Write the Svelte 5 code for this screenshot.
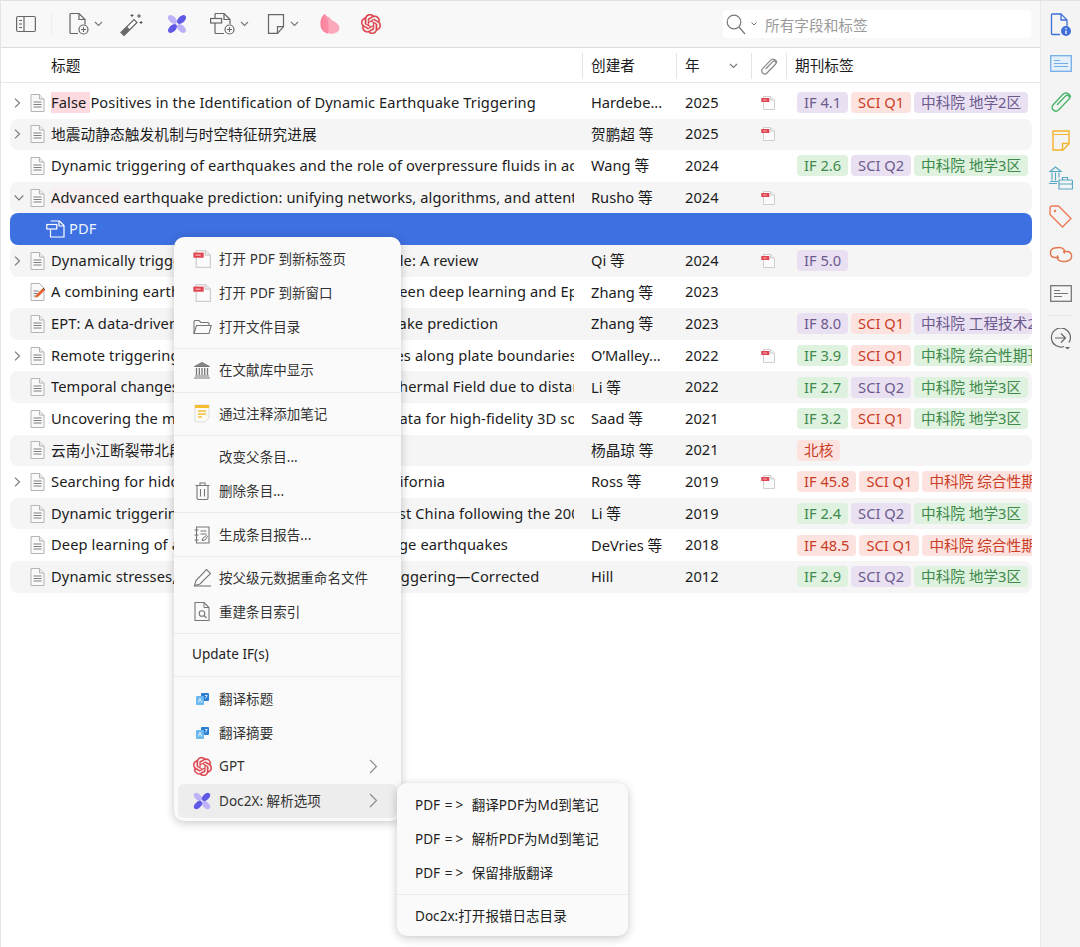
<script>
  const P = 'p', R = 'r', G = 'g';
  const rows = [
    { tw: 'r', ic: 'doc', hl: 'False ', title: 'Positives in the Identification of Dynamic Earthquake Triggering', who: 'Hardebe...', yr: '2025', pdf: true, tags: [[P, 'IF 4.1'], [R, 'SCI Q1'], [P, '中科院 地学2区']] },
    { tw: 'r', ic: 'doc', title: '地震动静态触发机制与时空特征研究进展', who: '贺鹏超 等', yr: '2025', pdf: true, tags: [] },
    { ic: 'doc', title: 'Dynamic triggering of earthquakes and the role of overpressure fluids in active faults', who: 'Wang 等', yr: '2024', tags: [[G, 'IF 2.6'], [P, 'SCI Q2'], [G, '中科院 地学3区']] },
    { tw: 'd', ic: 'doc', soft: 'Advanced', title: ' earthquake prediction: unifying networks, algorithms, and attention-based models', who: 'Rusho 等', yr: '2024', pdf: true, tags: [] },
    { sel: true, title: 'PDF', tags: [] },
    { tw: 'r', ic: 'doc', title: 'Dynamically triggered seismicity on the global scale: A review', who: 'Qi 等', yr: '2024', pdf: true, tags: [[P, 'IF 5.0']] },
    { ic: 'pen', title: 'A combining earthquake forecasting models between deep learning and Epidemic', who: 'Zhang 等', yr: '2023', tags: [] },
    { ic: 'doc', title: 'EPT: A data-driven transformer model for earthquake prediction', who: 'Zhang 等', yr: '2023', tags: [[P, 'IF 8.0'], [R, 'SCI Q1'], [P, '中科院 工程技术2区']] },
    { tw: 'r', ic: 'doc', title: 'Remote triggering of deep tremor and earthquakes along plate boundaries', who: 'O’Malley...', yr: '2022', pdf: true, tags: [[G, 'IF 3.9'], [R, 'SCI Q1'], [G, '中科院 综合性期刊']] },
    { ic: 'doc', title: 'Temporal changes of the Seismicity Rate in a Geothermal Field due to distant earthquakes', who: 'Li 等', yr: '2022', tags: [[G, 'IF 2.7'], [P, 'SCI Q2'], [G, '中科院 地学3区']] },
    { ic: 'doc', title: 'Uncovering the mechanisms using deep seismic data for high-fidelity 3D source models', who: 'Saad 等', yr: '2021', tags: [[G, 'IF 3.2'], [R, 'SCI Q1'], [G, '中科院 地学3区']] },
    { ic: 'doc', title: '云南小江断裂带北段', who: '杨晶琼 等', yr: '2021', tags: [[R, '北核']] },
    { tw: 'r', ic: 'doc', title: 'Searching for hidden earthquakes in Southern California', who: 'Ross 等', yr: '2019', pdf: true, tags: [[R, 'IF 45.8'], [R, 'SCI Q1'], [R, '中科院 综合性期刊']] },
    { ic: 'doc', title: 'Dynamic triggering of earthquakes in an Southwest China following the 2004 event', who: 'Li 等', yr: '2019', tags: [[G, 'IF 2.4'], [P, 'SCI Q2'], [G, '中科院 地学3区']] },
    { ic: 'doc', title: 'Deep learning of aftershock patterns following large earthquakes', who: 'DeVries 等', yr: '2018', tags: [[R, 'IF 48.5'], [R, 'SCI Q1'], [R, '中科院 综合性期刊']] },
    { ic: 'doc', title: 'Dynamic stresses, Coulomb failure, and remote triggering—Corrected', who: 'Hill', yr: '2012', tags: [[G, 'IF 2.9'], [P, 'SCI Q2'], [G, '中科院 地学3区']] }
  ];
  const menu = [
    [['pdf', '打开 PDF 到新标签页'], ['pdf', '打开 PDF 到新窗口'], ['folder', '打开文件目录']],
    [['bank', '在文献库中显示']],
    [['note', '通过注释添加笔记']],
    [['', '改变父条目...'], ['trash', '删除条目...']],
    [['report', '生成条目报告...']],
    [['rename', '按父级元数据重命名文件'], ['reindex', '重建条目索引']],
    [[null, 'Update IF(s)']],
    [['trans', '翻译标题'], ['trans', '翻译摘要'], ['gpt', 'GPT', true], ['x', 'Doc2X: 解析选项', true, true]]
  ];
  const GPT = 'M22.2819 9.8211a5.9847 5.9847 0 0 0-.5157-4.9108 6.0462 6.0462 0 0 0-6.5098-2.9A6.0651 6.0651 0 0 0 4.9807 4.1818a5.9847 5.9847 0 0 0-3.9977 2.9 6.0462 6.0462 0 0 0 .7427 7.0966 5.98 5.98 0 0 0 .511 4.9107 6.051 6.051 0 0 0 6.5146 2.9001A5.9847 5.9847 0 0 0 13.2599 24a6.0557 6.0557 0 0 0 5.7718-4.2058 5.9894 5.9894 0 0 0 3.9977-2.9001 6.0557 6.0557 0 0 0-.7475-7.0729zm-9.022 12.6081a4.4755 4.4755 0 0 1-2.8764-1.0408l.1419-.0804 4.7783-2.7582a.7948.7948 0 0 0 .3927-.6813v-6.7369l2.02 1.1686a.071.071 0 0 1 .038.052v5.5826a4.504 4.504 0 0 1-4.4945 4.4944zm-9.6607-4.1254a4.4708 4.4708 0 0 1-.5346-3.0137l.142.0852 4.783 2.7582a.7712.7712 0 0 0 .7806 0l5.8428-3.3685v2.3324a.0804.0804 0 0 1-.0332.0615L9.74 19.9502a4.4992 4.4992 0 0 1-6.1408-1.6464zM2.3408 7.8956a4.485 4.485 0 0 1 2.3655-1.9728V11.6a.7664.7664 0 0 0 .3879.6765l5.8144 3.3543-2.0201 1.1685a.0757.0757 0 0 1-.071 0l-4.8303-2.7865A4.504 4.504 0 0 1 2.3408 7.872zm16.5963 3.8558L13.1038 8.364 15.1192 7.2a.0757.0757 0 0 1 .071 0l4.8303 2.7913a4.4944 4.4944 0 0 1-.6765 8.1042v-5.6772a.79.79 0 0 0-.407-.667zm2.0107-3.0231l-.142-.0852-4.7735-2.7818a.7759.7759 0 0 0-.7854 0L9.409 9.2297V6.8974a.0662.0662 0 0 1 .0284-.0615l4.8303-2.7866a4.4992 4.4992 0 0 1 6.6802 4.66zM8.3065 12.863l-2.02-1.1638a.0804.0804 0 0 1-.038-.0567V6.0742a4.4992 4.4992 0 0 1 7.3757-3.4537l-.142.0805L8.704 5.459a.7948.7948 0 0 0-.3927.6813zm1.0976-2.3654l2.602-1.4998 2.6069 1.4998v2.9994l-2.5974 1.4997-2.6067-1.4997Z';
</script>

{#snippet chev()}
  <svg class="chev" width="9" height="6" viewBox="0 0 9 6"><path d="M1 1l3.500 3.500L8 1" fill="none" stroke="#777" stroke-width="1.100"/></svg>
{/snippet}

{#snippet docIcon()}
  <svg width="15" height="18" viewBox="0 0 15 18"><path d="M1 .5h8.500l4.500 4.500v12.500H1z" fill="#f9f9f9" stroke="#b4b4b4"/><path d="M9.500.5V5H14" fill="#eee" stroke="#b4b4b4"/><path d="M3.500 8h8M3.500 10.500h8M3.500 13h8" stroke="#808080"/></svg>
{/snippet}

{#snippet penIcon()}
  <svg width="15" height="18" viewBox="0 0 15 18"><path d="M1 .5h8.500l4.500 4.500v12.500H1z" fill="#f9f9f9" stroke="#b4b4b4"/><path d="M3.500 8h5M3.500 10.500h4M3.500 13h3" stroke="#808080"/><path d="M5 15l1.500-3.500L13 5l2 2-6.500 6.500z" fill="#e2632b"/><path d="M13 5l2 2" stroke="#555"/></svg>
{/snippet}

{#snippet pdfIcon(s = 14)}
  <svg width={s} height={s} viewBox="0 0 14 14"><path d="M2.500.5h7l4 3.500v9.500h-11z" fill="#fbfbfb" stroke="#cfcfcf"/><path d="M9.500.5V4h4" fill="#eee" stroke="#cfcfcf"/><rect x=".3" y="2" width="8" height="4" fill="#e0434f"/><rect x="2" y="3.500" width="4" height="1" fill="#f6b0b5"/></svg>
{/snippet}

{#snippet xLogo(s = 20)}
  <svg width={s} height={s} viewBox="0 0 20 20">
    <ellipse cx="5.500" cy="5.500" rx="5.400" ry="3.300" transform="rotate(45 5.500 5.500)" fill="#bdb2f7"/>
    <ellipse cx="14.500" cy="14.500" rx="5.400" ry="3.300" transform="rotate(45 14.500 14.500)" fill="#bdb2f7"/>
    <ellipse cx="14.500" cy="5.500" rx="5.400" ry="3.300" transform="rotate(-45 14.500 5.500)" fill="#5f58e6"/>
    <ellipse cx="5.500" cy="14.500" rx="5.400" ry="3.300" transform="rotate(-45 5.500 14.500)" fill="#5f58e6"/>
  </svg>
{/snippet}

{#snippet gptIcon(s = 20)}
  <svg width={s} height={s} viewBox="0 0 24 24"><path d={GPT} fill="#dc4049" stroke="#dc4049" stroke-width=".4"/></svg>
{/snippet}

{#snippet menuIcon(n)}
  {#if n === 'pdf'}
    {@render pdfIcon(18)}
  {:else if n === 'folder'}
    <svg width="19" height="16" viewBox="0 0 19 16"><path d="M1 14.500V2.500a1 1 0 0 1 1-1h4l2 2h7a1 1 0 0 1 1 1V6" fill="none" stroke="#777" stroke-width="1.100"/><path d="M1 14.500l2.500-8h14.800l-2.300 8z" fill="none" stroke="#777" stroke-width="1.100"/></svg>
  {:else if n === 'bank'}
    <svg width="18" height="18" viewBox="0 0 18 18"><path d="M1.500 5.500L9 1.500l7.500 4z" fill="#888" stroke="#777"/><path d="M3.500 7v7M6.300 7v7M9 7v7M11.700 7v7M14.500 7v7" stroke="#777" stroke-width="1.300"/><path d="M2 15h14M1 17h16" stroke="#777" stroke-width="1.100"/></svg>
  {:else if n === 'note'}
    <svg width="16" height="19" viewBox="0 0 16 19"><path d="M1 1h14v13l-4 4H2a1 1 0 0 1-1-1z" fill="#fbfaf2" stroke="#ddd"/><rect x="1" y="1" width="14" height="3" fill="#f3bd2d"/><path d="M4 7h8M4 10h8M4 13h4" stroke="#f0c040" stroke-width="1.300"/></svg>
  {:else if n === 'trash'}
    <svg width="15" height="18" viewBox="0 0 15 18"><path d="M2 4v12a1.500 1.500 0 0 0 1.500 1.500h8A1.500 1.500 0 0 0 13 16V4M.5 3.500h14M5 3.500V1h5v2.500M5.500 7v7.500M9.500 7v7.500" fill="none" stroke="#777" stroke-width="1.100"/></svg>
  {:else if n === 'report'}
    <svg width="17" height="18" viewBox="0 0 17 18"><path d="M2.500 1h12.500v16H2.500z" fill="none" stroke="#777" stroke-width="1.100"/><path d="M.5 4h4M.5 9h4M.5 14h4M6.500 5h6M6.500 8h6" stroke="#777" stroke-width="1.100"/><path d="M8 14.500l1-2.500 3.500-2.500 1 1-2.500 3.500z" fill="none" stroke="#777"/></svg>
  {:else if n === 'rename'}
    <svg width="19" height="19" viewBox="0 0 19 19"><path d="M1.500 17.500l1.500-5L13.500 1.500l4 4L7 16z" fill="none" stroke="#777" stroke-width="1.100"/><path d="M1 18h17" stroke="#777" stroke-width="1.100"/></svg>
  {:else if n === 'reindex'}
    <svg width="16" height="19" viewBox="0 0 16 19"><path d="M1 .5h9l5 5v13H1z" fill="none" stroke="#777" stroke-width="1.100"/><path d="M10 .5v5h5" fill="none" stroke="#777"/><circle cx="8" cy="11.500" r="2.800" fill="none" stroke="#777" stroke-width="1.100"/><path d="M10 13.500l2.500 2.500" stroke="#777" stroke-width="1.100"/></svg>
  {:else if n === 'trans'}
    <svg width="13" height="14" viewBox="0 0 13 14"><rect x="5" y="1" width="8" height="8" rx="1" fill="#2b7fd0"/><rect x="0" y="4" width="8" height="9" rx="1" fill="#6cb8f0"/><path d="M2.300 10.500L4 6.500l1.700 4M9 3.500h2.200L9.500 6.500" fill="none" stroke="#fff" stroke-width=".8"/></svg>
  {:else if n === 'gpt'}
    {@render gptIcon(19)}
  {:else if n === 'x'}
    {@render xLogo(18)}
  {/if}
{/snippet}

<div class="app">
  <div class="main">
    <div class="toolbar">
      <svg class="t-panel" width="20" height="18" viewBox="0 0 20 18"><rect x=".6" y="1.500" width="18.800" height="15" rx="1.500" fill="none" stroke="#666" stroke-width="1.200"/><path d="M8 1.500v15" stroke="#666" stroke-width="1.200"/><path d="M3 5.500h3M3 9h3M3 12.500h3" stroke="#666" stroke-width="1.200"/></svg>
      <span class="t-sep"></span>
      <svg class="t-new" width="20" height="22" viewBox="0 0 20 22"><path d="M9 20.500H2a1 1 0 0 1-1-1V1.500a1 1 0 0 1 1-1h8l6 6v5" fill="none" stroke="#666" stroke-width="1.200"/><path d="M10 .5v6h6" fill="none" stroke="#666" stroke-width="1.200"/><circle cx="14.500" cy="16.500" r="4.500" fill="#f8f8f8" stroke="#666" stroke-width="1.200"/><path d="M14.500 14v5M12 16.500h5" stroke="#666" stroke-width="1.100"/></svg>
      {@render chev()}
      <svg class="t-wand" width="23" height="23" viewBox="0 0 23 23"><path d="M1 19.500L14 6.500l3 3L4 22.500z" fill="#fff" stroke="#666" stroke-width="1.200"/><path d="M1 19.500l3 3 6-6-3-3z" fill="#6a6a6a"/><path d="M19 1v4M17 3h4M21 8v3M19.500 9.500h3M12 1v3M10.500 2.500h3" stroke="#555"/></svg>
      <span class="t-x">{@render xLogo(20)}</span>
      <svg class="t-att" width="25" height="22" viewBox="0 0 25 22"><path d="M14 20.500H6a1 1 0 0 1-1-1V10M5 5.500V1.500a1 1 0 0 1 1-1h8l6 6v4.500" fill="none" stroke="#666" stroke-width="1.200"/><path d="M14 .5v6h6" fill="none" stroke="#666" stroke-width="1.200"/><rect x=".6" y="5.500" width="11" height="4.500" fill="#f8f8f8" stroke="#666" stroke-width="1.200"/><circle cx="19.500" cy="16.500" r="4.500" fill="#f8f8f8" stroke="#666" stroke-width="1.200"/><path d="M19.500 14v5M17 16.500h5" stroke="#666" stroke-width="1.100"/></svg>
      {@render chev()}
      <svg class="t-note" width="18" height="20" viewBox="0 0 18 20"><path d="M1.500.6h15v12l-6 6.800h-9z" fill="none" stroke="#666" stroke-width="1.200"/><path d="M10.500 19.400v-6.800h6" fill="none" stroke="#666" stroke-width="1.200"/></svg>
      {@render chev()}
      <svg class="t-pink" width="20" height="20" viewBox="0 0 20 20"><path d="M5 0C1.500 2 0 6.500 .5 11c.4 4.500 3.500 8 7.500 8.500 1.500-3 1-13-3-19.500z" fill="#fb7f99"/><path d="M4.500 1c3.500 1 6 3 7.500 5.500 3.500 1 7.500 4.500 7.500 7.500 0 3.500-4 6-8.500 5.800-5-.2-8.500-3.800-8.500-8.800C2.500 7.500 3 4 4.500 1z" fill="#fb8da5" opacity=".75"/></svg>
      <span class="t-gpt">{@render gptIcon(20)}</span>
      <div class="search">
        <svg width="20" height="21" viewBox="0 0 20 21"><circle cx="8" cy="8" r="6.800" fill="none" stroke="#777" stroke-width="1.200"/><path d="M13 13l6 7" stroke="#777" stroke-width="1.200"/></svg>
        <svg class="s-chev" width="6" height="4" viewBox="0 0 6 4"><path d="M.5.5L3 3 5.500.5" fill="none" stroke="#777"/></svg>
        <span>所有字段和标签</span>
      </div>
    </div>

    <div class="thead">
      <div class="c-title"><span>标题</span></div>
      <div class="c-who"><span>创建者</span></div>
      <div class="c-yr"><span>年</span>{@render chev()}</div>
      <div class="c-att"><svg width="18" height="19" viewBox="0 0 22 22"><path d="M7 14L15.500 5c2-2.200 5.500.8 3.300 3.300L8.500 19c-2.800 3-8.500-1-5.500-5L12.500 3.800c3.500-3.800 9-.3 7.500 3.200" fill="none" stroke="#8a8a8a" stroke-width="1.500"/></svg></div>
      <div class="c-tags"><span>期刊标签</span></div>
    </div>

    <div class="rows">
      {#each rows as r, i}
        <div class="row" class:alt={i % 2 === 1} class:sel={r.sel}>
          <div class="c-head">
            {#if r.tw === 'r'}
              <svg class="tw" width="7" height="10" viewBox="0 0 7 10"><path d="M1 .7L5.500 5 1 9.300" fill="none" stroke="#777" stroke-width="1.100"/></svg>
            {:else if r.tw === 'd'}
              <svg class="tw" width="10" height="7" viewBox="0 0 10 7"><path d="M.7 1L5 5.500 9.300 1" fill="none" stroke="#777" stroke-width="1.100"/></svg>
            {/if}
            {#if r.ic === 'doc'}
              <span class="ic">{@render docIcon()}</span>
            {:else if r.ic === 'pen'}
              <span class="ic">{@render penIcon()}</span>
            {/if}
          </div>
          <div class="c-title" class:child={r.sel}>
            {#if r.sel}
              <svg class="sel-ic" width="19" height="18" viewBox="0 0 19 18"><path d="M4.500 1h9l4.500 4.500V17H4.500V9.500" fill="none" stroke="#fff" stroke-width="1.200"/><path d="M13 1v5h5" fill="none" stroke="#fff" stroke-width="1.200"/><rect x=".8" y="4.500" width="10" height="4.500" fill="#3d70e0" stroke="#fff" stroke-width="1.200"/></svg>
            {/if}
            {#if r.hl}<mark class="hl">{r.hl}</mark>{/if}{#if r.soft}<mark class="soft">{r.soft}</mark>{/if}{r.title}
          </div>
          <div class="c-who">{r.who ?? ''}</div>
          <div class="c-yr">{r.yr ?? ''}</div>
          <div class="c-att">{#if r.pdf}{@render pdfIcon()}{/if}</div>
          <div class="c-tags">
            {#each r.tags as t}
              <span class="tag {t[0]}">{t[1]}</span>
            {/each}
          </div>
        </div>
      {/each}
    </div>
  </div>

  <div class="side">
    <span class="si"><svg width="22" height="24" viewBox="0 0 22 24"><path d="M10 21.500H2.500a1 1 0 0 1-1-1V2a1 1 0 0 1 1-1h8.500l6 6v6" fill="none" stroke="#3f6fd8" stroke-width="1.300"/><path d="M11 1v6h6" fill="none" stroke="#3f6fd8" stroke-width="1.300"/><circle cx="16" cy="18" r="5" fill="#3f6fd8"/><path d="M16 17.500v3.500M16 15v1.200" stroke="#fff" stroke-width="1.300"/></svg></span>
    <span class="si"><svg width="22" height="17" viewBox="0 0 22 17"><rect x=".7" y=".7" width="20.600" height="15.600" fill="#e3effb" stroke="#74aee8" stroke-width="1.300"/><path d="M4 5.500h6M4 8.500h14M4 11.500h14" stroke="#74aee8" stroke-width="1.200"/></svg></span>
    <span class="si"><svg width="22" height="22" viewBox="0 0 22 22"><path d="M7 14L15.500 5c2-2.200 5.500.8 3.300 3.300L8.500 19c-2.800 3-8.500-1-5.500-5L12.500 3.800c3.500-3.800 9-.3 7.500 3.200" fill="none" stroke="#4cb56c" stroke-width="1.400"/></svg></span>
    <span class="si"><svg width="18" height="21" viewBox="0 0 18 21"><path d="M1 1h16v13l-6 6H1z" fill="none" stroke="#f5b22d" stroke-width="1.400"/><path d="M1 4.500h16" stroke="#f5b22d"/><path d="M10.500 20v-6.500H17" fill="none" stroke="#f5b22d" stroke-width="1.400"/></svg></span>
    <span class="si"><svg width="24" height="24" viewBox="0 0 24 24"><path d="M1 5.500L6.500 1 12 5.500z" fill="none" stroke="#58a7c4" stroke-width="1.200"/><path d="M3 6.500v8M6.500 6.500v8M10 6.500v5M1 15.500h8M0 17.500h8" stroke="#58a7c4" stroke-width="1.200"/><path d="M10 23V14h12.500a1 1 0 0 1 1 1v8zM10 18h13.500M13.500 14v-2.500h5V14" fill="none" stroke="#58a7c4" stroke-width="1.200"/></svg></span>
    <span class="si"><svg width="23" height="23" viewBox="0 0 23 23"><path d="M1 3a2 2 0 0 1 2-2h6.500L22 13.500 13.500 22 1 9.500z" fill="none" stroke="#f07a58" stroke-width="1.400" stroke-linejoin="round"/><circle cx="6" cy="6" r="1.200" fill="#f07a58"/></svg></span>
    <span class="si"><svg width="24" height="17" viewBox="0 0 24 17"><path d="M10 11.500H6c-5.500 0-6.500-8-.5-9.500 3-.7 7.500-.5 9 1 1.300 1.300 1.500 3 .5 4.500" fill="none" stroke="#e4764e" stroke-width="1.400"/><path d="M14 5.500h4c5.500 0 6.500 8 .5 9.500-3 .7-7.500.5-9-1-1.300-1.300-1.500-3-.5-4.500" fill="none" stroke="#e4764e" stroke-width="1.400"/></svg></span>
    <span class="si"><svg width="22" height="17" viewBox="0 0 22 17"><rect x=".7" y=".7" width="20.600" height="15.600" fill="#f7f7f7" stroke="#777" stroke-width="1.300"/><path d="M4 5.500h6M4 8.500h14M4 11.500h8" stroke="#777" stroke-width="1.200"/></svg></span>
    <span class="side-sep"></span>
    <span class="si"><svg width="21" height="22" viewBox="0 0 21 22"><path d="M14 18.500a9.500 9.500 0 1 1 5-4" fill="none" stroke="#666" stroke-width="1.200"/><path d="M5 10h10M11 5.500l4.500 4.500-4.500 4.500" fill="none" stroke="#666" stroke-width="1.200"/><path d="M15 19h5l-2.500 2.500z" fill="#666"/></svg></span>
  </div>

  <div class="menu main-menu">
    {#each menu as group, g}
      {#if g > 0}<div class="msep"></div>{/if}
      {#each group as it}
        <div class="item" class:hover={it[3]} class:noicon={it[0] === null}>
          {#if it[0] !== null}<span class="mi">{@render menuIcon(it[0])}</span>{/if}
          <span class="lbl">{it[1]}</span>
          {#if it[2]}
            <svg class="arrow" width="9" height="15" viewBox="0 0 9 15"><path d="M1 1l6.500 6.500L1 14" fill="none" stroke="#888" stroke-width="1.100"/></svg>
          {/if}
        </div>
      {/each}
    {/each}
  </div>

  <div class="menu sub-menu">
    <div class="item noicon"><span class="lbl">PDF <span class="arr">=&gt;</span> 翻译PDF为Md到笔记</span></div>
    <div class="item noicon"><span class="lbl">PDF <span class="arr">=&gt;</span> 解析PDF为Md到笔记</span></div>
    <div class="item noicon"><span class="lbl">PDF <span class="arr">=&gt;</span> 保留排版翻译</span></div>
    <div class="msep"></div>
    <div class="item noicon"><span class="lbl">Doc2x:打开报错日志目录</span></div>
  </div>
</div>

<style>
  :global(body) { margin: 0; background: #fff; }
  .app {
    position: relative;
    width: 1080px;
    height: 947px;
    overflow: hidden;
    display: flex;
    font-family: "Noto Sans", "Noto Sans CJK SC", sans-serif;
    color: #1c1c1c;
    background: #fff;
  }
  .main { width: 1040px; border-left: 1px solid #e4e4e4; box-sizing: border-box; }

  .toolbar {
    height: 48px;
    box-sizing: border-box;
    background: #f8f8f8;
    border-top: 1px solid #e2e2e2;
    border-bottom: 1px solid #dcdcdc;
    display: flex;
    align-items: center;
  }
  .toolbar svg { flex: none; display: block; }
  .t-panel { margin-left: 15px; }
  .t-sep { width: 1px; height: 24px; background: #eee; margin-left: 15px; }
  .t-new { margin-left: 17px; }
  .chev { margin-left: 5px; }
  .t-wand { margin-left: 17px; }
  .t-x { margin-left: 24px; }
  .t-att { margin-left: 23px; }
  .t-note { margin-left: 18px; }
  .t-pink { margin-left: 21px; }
  .t-gpt { margin-left: 21px; }
  .search {
    margin-left: auto;
    margin-right: 9px;
    width: 308px;
    height: 28px;
    box-sizing: border-box;
    background: #fff;
    border-radius: 4px;
    display: flex;
    align-items: center;
    padding-left: 3px;
    font-size: 14.67px;
    color: #9a9a9a;
  }
  .s-chev { margin: 0 8px 0 5px; }

  .thead, .row {
    display: grid;
    align-items: center;
    font-size: 14.67px;
    white-space: nowrap;
  }
  .thead {
    grid-template-columns: 581px 94px 75px 35px 1fr;
    height: 35px;
    box-sizing: border-box;
    border-bottom: 1px solid #e8e8e8;
    padding-top: 2px;
  }
  .thead > div { height: 26px; display: flex; align-items: center; box-sizing: border-box; }
  .thead > div > span { position: relative; top: -2px; }
  .thead > div + div { border-left: 1px solid #e4e4e4; padding-left: 8px; }
  .thead .c-title { padding-left: 50px; }
  .thead .c-yr span { flex: 1; }
  .thead .c-yr { padding-right: 13px; }
  .thead .c-att { justify-content: center; padding-left: 0; }

  .rows { padding: 4px 8px 0 9px; }
  .row {
    position: relative;
    grid-template-columns: 41px 531px 94px 76px 34px 1fr;
    height: 31.6px;
    border-radius: 8px;
  }
  .row.alt { background: #f5f5f5; }
  .row.sel { background: #3d70e0; color: #eef3ff; }
  .c-head { display: flex; align-items: center; height: 100%; position: relative; }
  .tw { position: absolute; left: 4px; top: 50%; transform: translateY(-50%); }
  .ic { position: absolute; left: 20px; top: 50%; transform: translateY(-50%); display: block; height: 18px; }
  .ic svg { display: block; }
  .row .c-title { overflow: hidden; margin-right: 8px; letter-spacing: 0.11px; padding-bottom: 2px; }
  .row .c-who, .row .c-yr { padding-bottom: 2px; }
  .row .c-title.child { overflow: visible; }
  .sel-ic { position: absolute; left: 36px; top: 7px; }
  .child { padding-left: 18px; }
  .hl { background: #fcdadf; color: inherit; padding: 1px 0; }
  .soft { background: #f9f0f1; color: inherit; padding: 1px 0; }
  .row .c-who { padding-left: 9px; padding-right: 14px; overflow: hidden; box-sizing: border-box; }
  .row .c-yr { padding-left: 9px; }
  .row .c-att { display: flex; justify-content: center; }
  .row .c-att svg { display: block; transform: translateX(-1px); }
  .row .c-tags { display: flex; gap: 3px; padding-left: 11px; overflow: hidden; min-width: 0; }
  .tag {
    flex: none;
    height: 21px;
    line-height: 20px;
    padding: 0 7px;
    border-radius: 4px;
  }
  .tag.p { background: #e9e1f1; color: #6c5a8f; }
  .tag.r { background: #fde3df; color: #c93d26; }
  .tag.g { background: #dff1df; color: #3d8a4b; }

  .side {
    width: 40px;
    background: #f4f4f4;
    border-top: 1px solid #e2e2e2;
    border-left: 1px solid #eaeaea;
    box-sizing: border-box;
    display: flex;
    flex-direction: column;
    align-items: center;
    padding-top: 5px;
  }
  .si { height: 38.3px; flex: none; display: flex; align-items: center; justify-content: center; }
  .si svg { display: block; }
  .side-sep { width: 24px; height: 1px; background: #e6e6e6; margin: 3px 0 3px; flex: none; }

  .menu {
    position: absolute;
    box-sizing: border-box;
    background: #fafafa;
    border-radius: 10px;
    padding: 5px 4px 3px;
    font-size: 13.5px;
    color: #333;
    box-shadow: 0 2px 10px rgba(0, 0, 0, 0.22);
    white-space: nowrap;
  }
  .main-menu { left: 174px; top: 237px; width: 227px; }
  .sub-menu { left: 397px; top: 783px; width: 231px; padding-top: 4.5px; }
  .item {
    height: 34px;
    display: flex;
    align-items: center;
    padding-left: 14px;
    border-radius: 6px;
    position: relative;
    box-sizing: border-box;
    letter-spacing: 0.05px;
  }
  .item .lbl { position: relative; top: -1px; }
  .item.hover { background: #ededed; }
  .noicon .lbl { color: #222; }
  .arr { letter-spacing: 3px; margin-right: 2px; margin-left: 1px; }
  .mi { width: 20px; margin-right: 7px; display: flex; justify-content: center; align-items: center; flex: none; }
  .mi svg { display: block; }
  .arrow { position: absolute; right: 19px; top: 9px; }
  .msep { height: 1px; background: #eaeaea; margin: 4.2px -4px; }
</style>
